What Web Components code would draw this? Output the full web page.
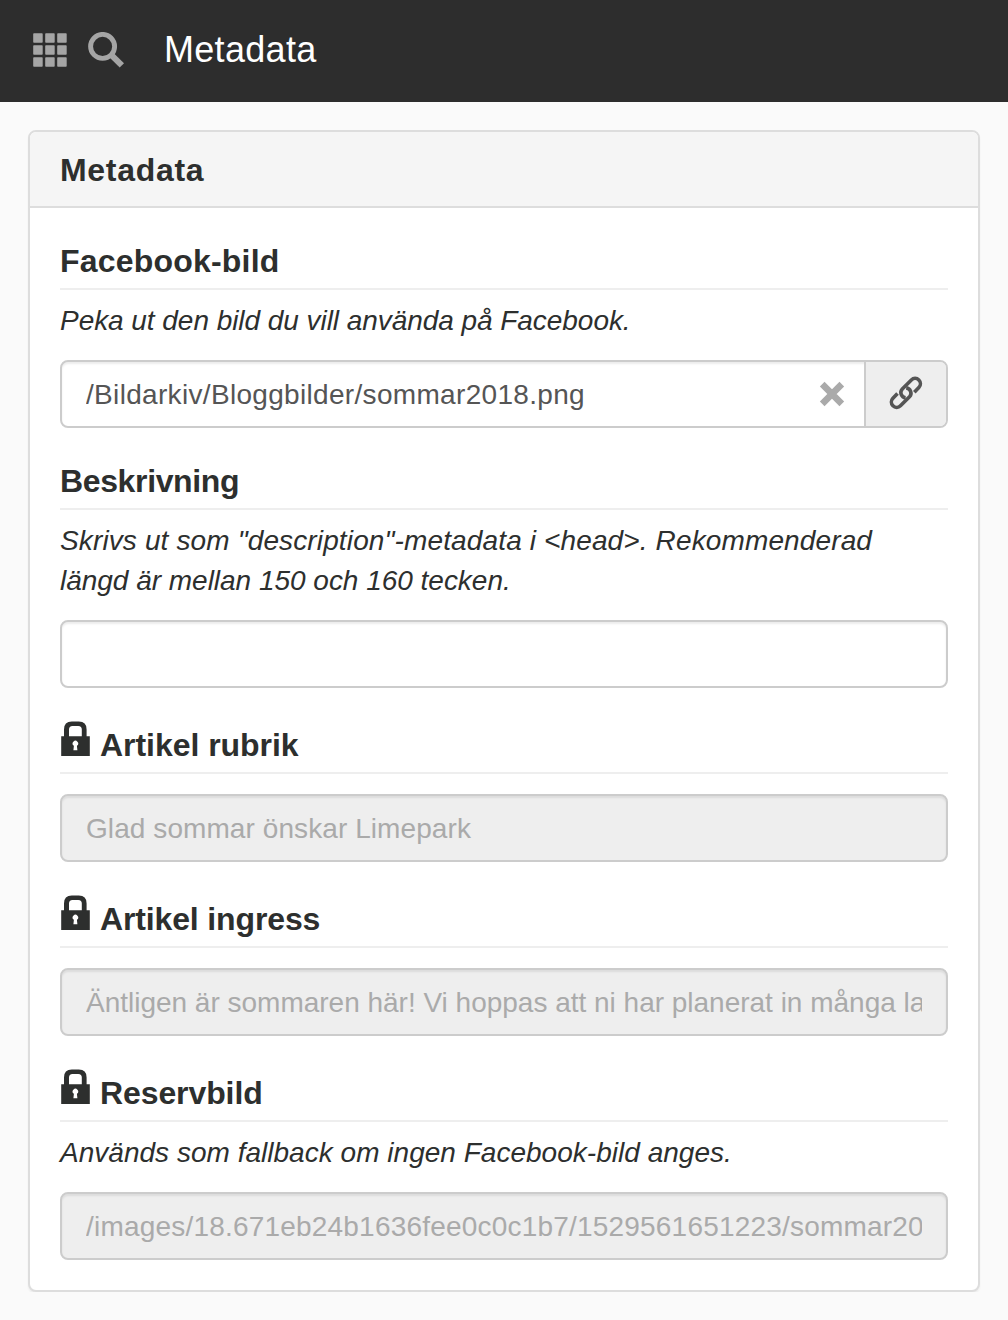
<!DOCTYPE html>
<html lang="sv">
<head>
<meta charset="utf-8">
<title>Metadata</title>
<style>
body { margin: 0; background: #fafafa; color: #2d2f2e; font-family: "Liberation Sans", Arial, sans-serif; font-size: 28px; line-height: 40px; }
</style>
</head>
<body>
<app-header><span style="letter-spacing:.3px">Metadata</span></app-header>
<form-panel>
  <span slot="title" style="letter-spacing:.7px">Metadata</span>
  <form-field>
    <span slot="label" style="letter-spacing:.2px">Facebook-bild</span>
    <span slot="help" style="letter-spacing:-.05px">Peka ut den bild du vill använda på Facebook.</span>
    <text-box picker><span style="letter-spacing:.32px">/Bildarkiv/Bloggbilder/sommar2018.png</span></text-box>
  </form-field>
  <form-field>
    <span slot="label" style="letter-spacing:-.36px">Beskrivning</span>
    <span slot="help"><span style="letter-spacing:.13px">Skrivs ut som "description"-metadata i &lt;head&gt;. Rekommenderad</span><br><span style="letter-spacing:-.02px">längd är mellan 150 och 160 tecken.</span></span>
    <text-box></text-box>
  </form-field>
  <form-field locked>
    <span slot="label" style="letter-spacing:-.04px">Artikel rubrik</span>
    <text-box disabled><span style="letter-spacing:.08px">Glad sommar önskar Limepark</span></text-box>
  </form-field>
  <form-field locked>
    <span slot="label" style="letter-spacing:-.14px">Artikel ingress</span>
    <text-box disabled><span style="letter-spacing:-.01px">Äntligen är sommaren här! Vi hoppas att ni har planerat in många la</span></text-box>
  </form-field>
  <form-field locked>
    <span slot="label" style="letter-spacing:-.1px">Reservbild</span>
    <span slot="help" style="letter-spacing:.02px">Används som fallback om ingen Facebook-bild anges.</span>
    <text-box disabled><span style="letter-spacing:.2px">/images/18.671eb24b1636fee0c0c1b7/1529561651223/sommar20</span></text-box>
  </form-field>
</form-panel>
<script>
const define = (name, html) => customElements.define(name, class extends HTMLElement {
  constructor() {
    super();
    const t = document.createElement('template');
    t.innerHTML = html;
    this.attachShadow({ mode: 'open' }).appendChild(t.content);
  }
});

define('app-header', `
<style>
:host { display: flex; align-items: center; height: 102px; box-sizing: border-box; padding: 0 0 2px 33px; background: #2d2d2d; color: #fff; font-size: 36px; }
svg { display: block; fill: #a5a5a5; }
.search { margin-left: 21px; }
.title { margin-left: 40px; }
</style>
<svg width="34" height="34" viewBox="0 0 34 34"><g id="r"><rect x=".2" y=".2" width="9.500" height="9.500" rx=".8"/><rect x="12.200" y=".2" width="9.500" height="9.500" rx=".8"/><rect x="24.200" y=".2" width="9.500" height="9.500" rx=".8"/></g><use href="#r" y="12"/><use href="#r" y="24"/></svg>
<svg class="search" width="36" height="36" viewBox="0 0 36 36"><circle cx="14.600" cy="14.400" r="12" fill="none" stroke="#a5a5a5" stroke-width="4.900"/><path d="M21.300 25.200l4.300-4.300L36 31.200l-4.300 4.300z"/></svg>
<div class="title"><slot></slot></div>`);

define('form-panel', `
<style>
:host { display: block; margin: 28px 28px 0; background: #fff; border: 2px solid #ddd; border-radius: 8px; box-shadow: 0 2px 2px rgba(0,0,0,.05); }
header { height: 76px; box-sizing: border-box; padding: 18px 30px; background: #f5f5f5; border-bottom: 2px solid #ddd; border-radius: 6px 6px 0 0; font-size: 32px; font-weight: bold; }
main { padding: 0 30px 30px; }
</style>
<header><slot name="title"></slot></header>
<main><slot></slot></main>`);

define('form-field', `
<style>
:host { display: block; padding-top: 30px; }
h3 { display: flex; margin: 0; height: 52px; box-sizing: border-box; padding-top: 3px; border-bottom: 2px solid #eee; font-size: 32px; font-weight: bold; }
svg { display: none; width: 29px; height: 36px; margin: -4px 10px 0 1px; }
:host([locked]) h3 { height: 56px; padding-top: 7px; }
:host([locked]) svg { display: block; }
.help { font-style: italic; white-space: nowrap; }
::slotted([slot="help"]) { display: block; margin: 11px 0 -1px; }
.control { margin-top: 20px; }
</style>
<h3><svg viewBox="0 0 29 36"><path fill="#2d2f2e" fill-rule="evenodd" d="M.2 15.300H3V8.500Q3 .6 10.800.6h7Q25.600.6 25.600 8.500v6.800h3.200V35H.2zM8 15.300h12.800V8.500Q20.800 5 17.300 5h-5.800Q8 5 8 8.500zM12.400 29.300l.5-4.500a2.700 2.700 0 1 1 3 0l.5 4.500z"/></svg><slot name="label"></slot></h3>
<div class="help"><slot name="help"></slot></div>
<div class="control"><slot></slot></div>`);

define('text-box', `
<style>
:host { display: flex; height: 68px; box-sizing: border-box; border: 2px solid #ccc; border-radius: 8px; background: #fff; color: #555; box-shadow: inset 0 2px 2px rgba(0,0,0,.075); line-height: 64px; }
:host([disabled]) { background: #eee; color: #aaa; }
.value { flex: 1; min-width: 0; margin: 0 24px; padding-top: 1px; height: 63px; overflow: hidden; white-space: nowrap; }
.tools { display: none; }
:host([picker]) .tools { display: flex; align-items: center; }
.pick { display: flex; align-items: center; justify-content: center; width: 80px; height: 64px; margin-left: 19px; border-left: 2px solid #ccc; border-radius: 0 6px 6px 0; background: #eee; }
.pick svg { margin-top: -2px; }
</style>
<div class="value"><slot></slot></div>
<div class="tools">
<svg width="26" height="26" viewBox="0 0 26 26"><path d="M3.200 3.200l19.600 19.600M22.800 3.200L3.200 22.800" stroke="#aaa" stroke-width="6.600"/></svg>
<div class="pick"><svg width="34" height="34" viewBox="0 0 34 34"><g fill="none" stroke="#555" stroke-width="3.600"><path id="l" d="M25.300 16.200L29.850 11.450A5.300 5.300 0 0 0 22.350 3.950L13.300 13A5.300 5.300 0 0 0 16.600 21.900"/><use href="#l" transform="rotate(180 16.900 16.900)"/></g></svg></div>
</div>`);
</script>
</body>
</html>
